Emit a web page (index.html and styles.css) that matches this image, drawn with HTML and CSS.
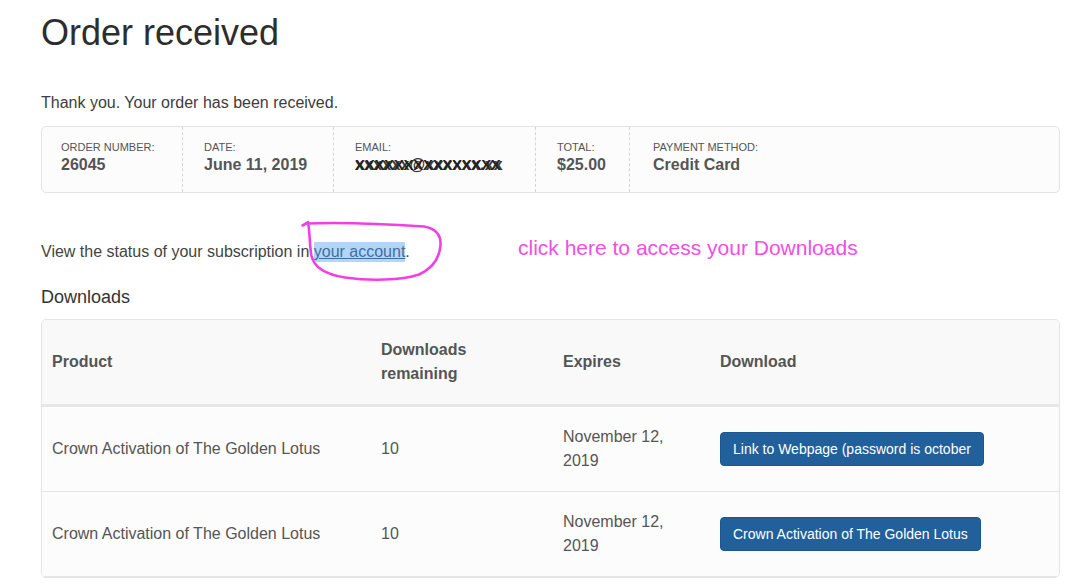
FILE: index.html
```html
<!DOCTYPE html>
<html lang="en">
<head>
<meta charset="utf-8">
<title>Order received</title>
<link rel="stylesheet" href="styles.css">
</head>
<body>
<main class="page">
  <h1 class="title">Order received</h1>
  <p class="thanks">Thank you. Your order has been received.</p>

  <ul class="overview">
    <li class="ov-item ov-first">
      <span class="ov-label">Order number:</span>
      <strong class="ov-value">26045</strong>
    </li>
    <li class="ov-item">
      <span class="ov-label">Date:</span>
      <strong class="ov-value">June 11, 2019</strong>
    </li>
    <li class="ov-item">
      <span class="ov-label">Email:</span>
      <strong class="ov-value email"><span class="email-base">xxxxxx@xxxxxx.xx</span><span class="email-scribble" aria-hidden="true">XXXXXXXXXXXXXXX</span></strong>
    </li>
    <li class="ov-item">
      <span class="ov-label">Total:</span>
      <strong class="ov-value">$25.00</strong>
    </li>
    <li class="ov-item ov-last">
      <span class="ov-label">Payment method:</span>
      <strong class="ov-value">Credit Card</strong>
    </li>
  </ul>

  <div class="status-wrap">
    <p class="status">View the status of your subscription in <a class="account-link" href="#">your account</a>.</p>
    <svg class="circle" viewBox="295 215 150 70" width="150" height="70" aria-hidden="true">
      <path d="M302.5,224.5 L308,221.5" fill="none" stroke="#f23fe4" stroke-width="2.6" stroke-linecap="round"/>
      <path d="M306,222.5 C330,221.5 380,222.5 424,225.5 C436,227.5 441,234 440.5,244 C439.5,258 431,268 419,273.5 C401,279.5 370,280 345,276.5 C326,273.5 314,266 311.5,255 C309.5,245 310,232 308,221" fill="none" stroke="#f23fe4" stroke-width="2.6" stroke-linecap="round" stroke-linejoin="round"/>
    </svg>
    <span class="note">click here to access your Downloads</span>
  </div>

  <h2 class="dl-title">Downloads</h2>

  <div class="dl-box">
    <table class="dl-table">
      <colgroup>
        <col class="c-product">
        <col class="c-remaining">
        <col class="c-expires">
        <col class="c-file">
      </colgroup>
      <thead>
        <tr>
          <th>Product</th>
          <th>Downloads remaining</th>
          <th>Expires</th>
          <th>Download</th>
        </tr>
      </thead>
      <tbody>
        <tr>
          <td>Crown Activation of The Golden Lotus</td>
          <td>10</td>
          <td>November 12, 2019</td>
          <td><a class="btn" href="#">Link to Webpage (password is october</a></td>
        </tr>
        <tr>
          <td>Crown Activation of The Golden Lotus</td>
          <td>10</td>
          <td>November 12, 2019</td>
          <td><a class="btn" href="#">Crown Activation of The Golden Lotus</a></td>
        </tr>
      </tbody>
    </table>
  </div>
</main>
</body>
</html>
```

FILE: styles.css
```css
html, body {
  margin: 0;
  padding: 0;
  background: #ffffff;
}

body {
  font-family: "Liberation Sans", Arial, Helvetica, sans-serif;
  color: #444444;
  font-size: 16px;
  line-height: 24px;
}

.page {
  margin: 0 26px 0 41px;
  padding-top: 11px;
}

.title {
  margin: 0;
  font-size: 36px;
  line-height: 43px;
  font-weight: normal;
  color: #2d2d2d;
}

.thanks {
  margin: 37px 0 0;
  color: #3d3d3d;
}

/* Order overview */
.overview {
  list-style: none;
  margin: 11px 0 0;
  padding: 0;
  display: grid;
  grid-template-columns: 141px 151px 202px 94px 1fr;
  border: 1px solid #e3e3e3;
  border-radius: 5px;
  background: #fcfcfc;
}

.ov-item {
  display: flex;
  flex-direction: column;
  padding: 12px 10px 18px 21px;
  border-right: 1px dashed #d4d4d4;
}

.ov-first {
  padding-left: 19px;
}

.ov-last {
  border-right: none;
  padding-left: 23px;
}

.ov-label {
  font-size: 11px;
  line-height: 16px;
  text-transform: uppercase;
  color: #555555;
}

.ov-value {
  font-size: 16px;
  line-height: 19px;
  font-weight: bold;
  color: #555555;
}

.email {
  position: relative;
  display: block;
  white-space: nowrap;
}

.email-base {
  color: #3a3a3a;
  letter-spacing: 0.2px;
}

.email-scribble {
  position: absolute;
  left: 0;
  top: 0;
  color: #222222;
  font-size: 15px;
  letter-spacing: -0.3px;
}

/* Subscription status + annotation */
.status-wrap {
  position: relative;
  margin-top: 47px;
}

.status {
  margin: 0;
  color: #444444;
}

.account-link {
  color: #3f6f9d;
  text-decoration: underline;
  background: #b4d5fb;
  padding: 1px 0 2px;
}

.circle {
  position: absolute;
  left: 254px;
  top: -24px;
  overflow: visible;
  pointer-events: none;
}

.note {
  position: absolute;
  left: 477px;
  top: -4px;
  font-size: 21px;
  line-height: 24px;
  color: #f04ee4;
  white-space: nowrap;
}

/* Downloads */
.dl-title {
  margin: 22px 0 0;
  font-size: 18px;
  line-height: 23px;
  font-weight: normal;
  color: #333333;
}

.dl-box {
  margin-top: 10px;
  border: 1px solid #e4e4e4;
  border-radius: 5px;
  overflow: hidden;
  background: #fcfcfc;
}

.dl-table {
  width: 100%;
  border-collapse: collapse;
  table-layout: fixed;
}

.c-product { width: 329px; }
.c-remaining { width: 182px; }
.c-expires { width: 157px; }

.dl-table th,
.dl-table td {
  padding: 18px 10px;
  text-align: left;
  vertical-align: middle;
  color: #555555;
  line-height: 24px;
}

.dl-table th {
  background: #f9f9f9;
  font-weight: bold;
  border-bottom: 3px solid #e7e7e7;
}

.dl-table td {
  background: #fcfcfc;
  border-bottom: 1px solid #e6e6e6;
}

.btn {
  display: inline-block;
  padding: 6px 12px;
  font-size: 14px;
  line-height: 20px;
  color: #ffffff;
  text-decoration: none;
  background: #22609c;
  border: 1px solid #1c5690;
  border-radius: 4px;
  white-space: nowrap;
}
```
